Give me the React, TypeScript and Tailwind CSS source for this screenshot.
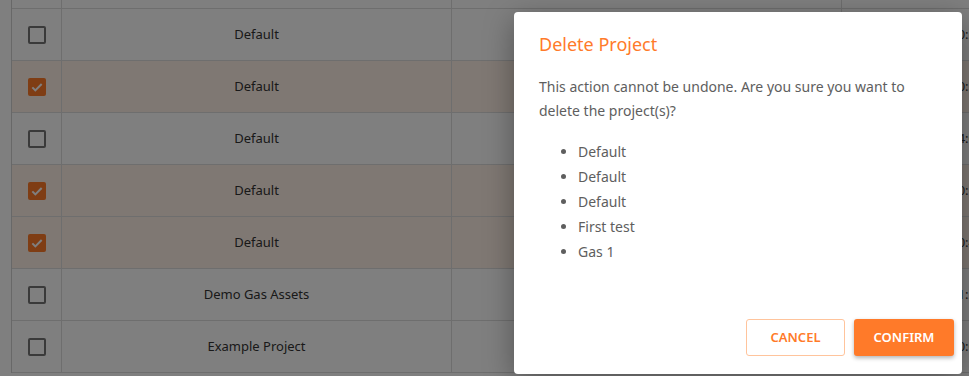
import React from 'react';

const rows = [
  { name: '', checked: false, time: '' },
  { name: 'Default', checked: false, time: '2024-03-12 10:24:11' },
  { name: 'Default', checked: true, time: '2024-03-12 10:31:45' },
  { name: 'Default', checked: false, time: '2024-03-13 14:02:37' },
  { name: 'Default', checked: true, time: '2024-03-14 10:15:20' },
  { name: 'Default', checked: true, time: '2024-03-15 10:48:03' },
  { name: 'Demo Gas Assets', checked: false, time: '2024-03-18 11:22:09' },
  { name: 'Example Project', checked: false, time: '2024-03-19 10:05:56' },
];

const selected = ['Default', 'Default', 'Default', 'First test', 'Gas 1'];

const Checkbox = ({ checked }: { checked: boolean }) =>
  checked ? (
    <span className="flex h-[18px] w-[18px] items-center justify-center rounded-[2px] bg-[#ff7a29]">
      <svg viewBox="0 0 24 24" className="h-[16px] w-[16px]" fill="none" stroke="#ffffff" strokeWidth="3">
        <path d="M5 12.5l4.5 4.5L19 7.5" />
      </svg>
    </span>
  ) : (
    <span className="block h-[18px] w-[18px] rounded-[2px] border-2 border-[#757575] bg-white" />
  );

export default function App() {
  return (
    <div
      className="relative h-[376px] w-[969px] overflow-hidden bg-white"
      style={{ fontFamily: '"Noto Sans", "Open Sans", sans-serif' }}
    >
      <div className="ml-[11px] -mt-[43px] border-l border-[#d0d0d0]">
        {rows.map((r, i) => (
          <div
            key={i}
            className={`grid h-[52px] grid-cols-[50px_390px_390px_260px] border-b border-[#dcdcdc] text-[13px] text-[#333333] ${
              r.checked ? 'bg-[#fff0e6]' : 'bg-white'
            }`}
          >
            <div className="flex items-center justify-center border-r border-[#dcdcdc]">
              {i > 0 && <Checkbox checked={r.checked} />}
            </div>
            <div className="flex items-center justify-center border-r border-[#dcdcdc]">{r.name}</div>
            <div className="flex items-center justify-center border-r border-[#dcdcdc]" />
            <div className="flex items-center whitespace-nowrap pl-[37px]">{r.time}</div>
          </div>
        ))}
      </div>

      <div className="absolute inset-0 bg-black/50">
        <div className="ml-[514px] mt-[12px] flex h-[362px] w-[448px] flex-col rounded-[4px] bg-white shadow-[0_8px_30px_rgba(0,0,0,0.35)]">
          <h2 className="px-[25px] pt-[20px] text-[18px] leading-[24px] text-[#ff7a2a]">Delete Project</h2>
          <div className="px-[25px] pt-[19px] text-[14px] text-[#5e5e5e]">
            <p className="leading-[24px]">
              This action cannot be undone. Are you sure you want to delete the project(s)?
            </p>
            <ul className="mt-[16px] list-disc pl-[39px] leading-[25px] marker:text-[#5e5e5e]">
              {selected.map((s, i) => (
                <li key={i}>{s}</li>
              ))}
            </ul>
          </div>
          <div className="mt-auto flex justify-end gap-[9px] pb-[18px] pr-[8px]">
            <button className="h-[37px] w-[99px] rounded-[3px] border border-[#ffc49c] bg-white text-[13px] font-semibold text-[#ff7a29]">
              CANCEL
            </button>
            <button className="h-[37px] w-[100px] rounded-[3px] bg-[#ff7a29] text-[13px] font-semibold text-white shadow-[0_2px_4px_rgba(0,0,0,0.3)]">
              CONFIRM
            </button>
          </div>
        </div>
      </div>
    </div>
  );
}
